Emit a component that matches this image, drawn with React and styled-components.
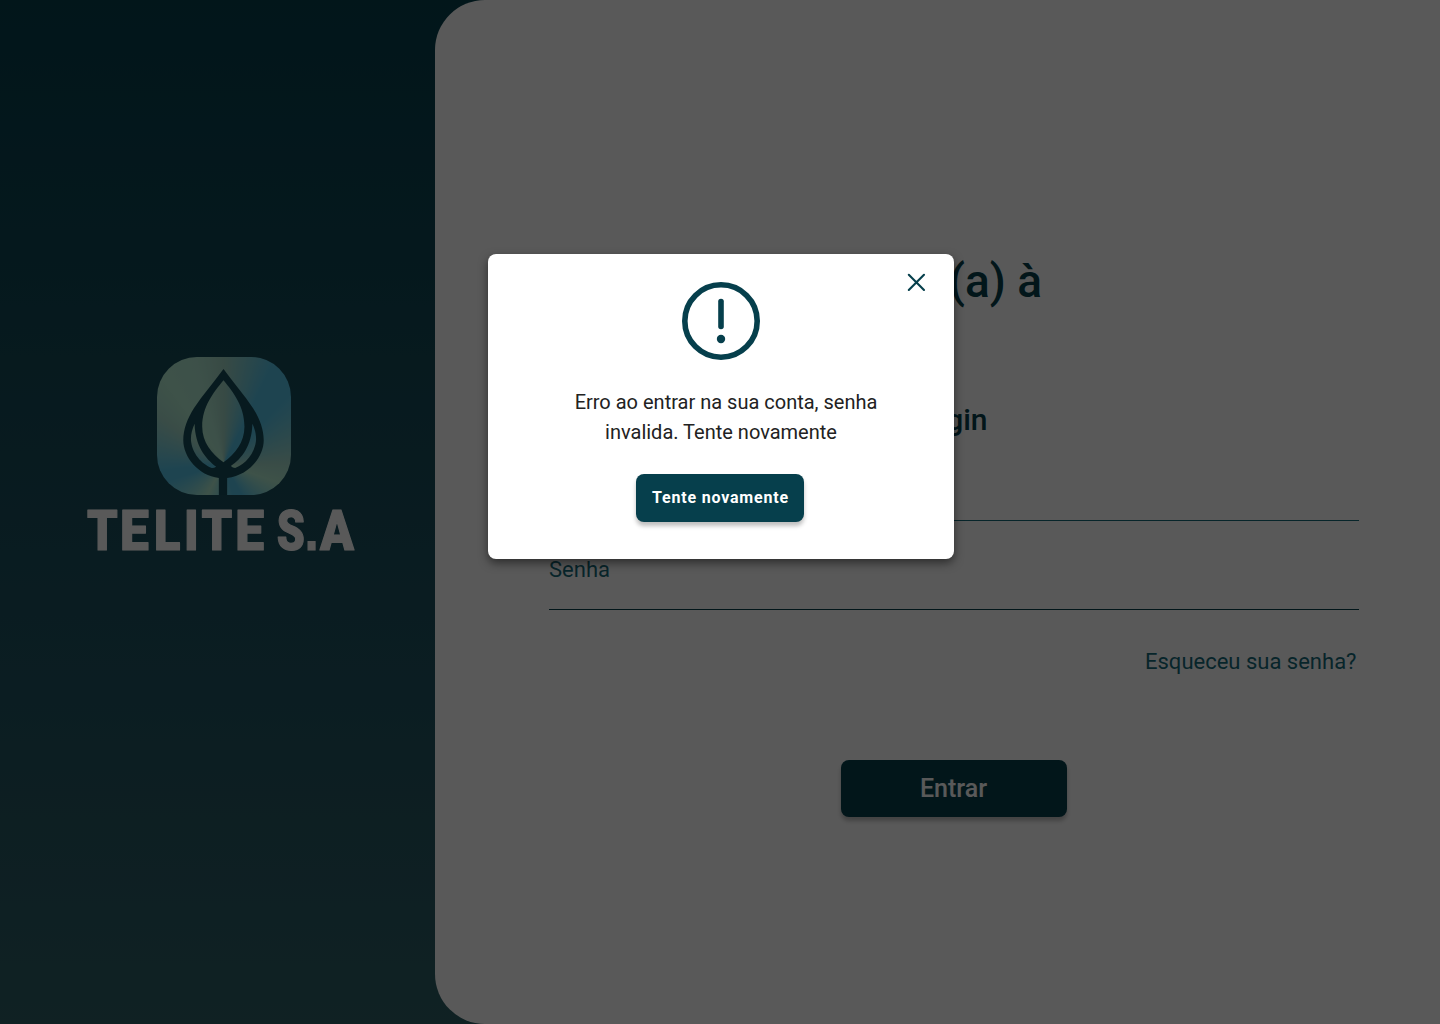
import React from "react";
import styled, { createGlobalStyle } from "styled-components";

const GlobalStyle = createGlobalStyle`
  * { box-sizing: border-box; }
  body { margin: 0; font-family: Roboto, "Liberation Sans", sans-serif; }
  button { font-family: inherit; border: 0; padding: 0; cursor: pointer; }
`;

const teal = "#063f4c";
const tealLight = "#166a7a";

const Page = styled.div`
  position: relative;
  display: flex;
  width: 1440px;
  height: 1024px;
  overflow: hidden;
  background: linear-gradient(180deg, #063f4c 0%, #1e5260 60%, #2e6066 100%);
`;

const Brand = styled.aside`
  width: 435px;
  padding: 357px 0 0 87px;
`;

const Emblem = styled.div`
  width: 133.5px;
  height: 137.5px;
  margin-left: 70px;
  border-radius: 40px;
  background: conic-gradient(
    from 0deg at 50% 77%,
    #a0d4c4 0deg,
    #58c4e6 26deg,
    #58c4e6 44deg,
    #a4dacb 90deg,
    #b2ebd0 110deg,
    #58c4e6 150deg,
    #58c4e6 165deg,
    #b2ebd0 208deg,
    #58c4e6 252deg,
    #58c4e6 264deg,
    #a4dacb 305deg,
    #b2ebd0 325deg,
    #aee6d0 345deg,
    #a0d4c4 360deg
  );
`;

const EmblemDrawing = styled.svg`
  display: block;
  width: 133px;
  height: 138px;
`;

const Wordmark = styled.svg`
  display: block;
  width: 270px;
  height: 60px;
  margin-top: 3.5px;
  overflow: visible;
`;

const Letter = styled.text`
  font-family: ${(p) => (p.$square ? '"Liberation Sans"' : "Roboto")}, sans-serif;
  font-size: 56px;
  font-weight: 900;
  fill: #ffffff;
  stroke: #ffffff;
  stroke-width: 1.2px;
  stroke-linejoin: ${(p) => (p.$square ? "miter" : "round")};
`;

const Panel = styled.main`
  flex: 1;
  display: flex;
  flex-direction: column;
  padding: 254px 81px 0 114px;
  border-radius: 50px 0 0 50px;
  background: #ffffff;
`;

const Title = styled.h1`
  width: 493px;
  margin: 0;
  color: ${teal};
  font-size: 46px;
  font-weight: 500;
  line-height: 54px;
  text-align: right;
  white-space: nowrap;
`;

const Subtitle = styled.h2`
  width: 438.5px;
  margin: 94px 0 0;
  color: ${teal};
  font-size: 30px;
  font-weight: 500;
  line-height: 36px;
  text-align: right;
`;

const Field = styled.label`
  height: ${(p) => p.$height || 89}px;
  padding-top: ${(p) => p.$top || 36}px;
  border-bottom: 1px solid ${(p) => p.$line};
  color: ${tealLight};
  font-size: 22px;
  line-height: 26px;
`;

const Forgot = styled.a`
  align-self: flex-end;
  margin: 39px 2.5px 0 0;
  color: ${tealLight};
  font-size: 22px;
  line-height: 26px;
`;

const Button = styled.button`
  width: ${(p) => p.$width}px;
  height: ${(p) => p.$height}px;
  border-radius: 8px;
  background: ${teal};
  box-shadow: 0 4px 4px rgba(0, 0, 0, 0.25);
  color: #ffffff;
  font-size: ${(p) => p.$size}px;
  font-weight: ${(p) => p.$weight};
  letter-spacing: ${(p) => p.$spacing || 0}px;
`;

const Submit = styled(Button)`
  align-self: center;
  margin: 85px 1px 0 0;
`;

const Overlay = styled.div`
  position: absolute;
  inset: 0;
  padding: 254px 0 0 488px;
  background: rgba(0, 0, 0, 0.65);
`;

const Dialog = styled.section`
  display: grid;
  grid-template-columns: 1fr 78px 1fr;
  justify-items: center;
  align-content: start;
  width: 466px;
  height: 305px;
  padding: 18px 27px 0;
  border-radius: 8px;
  background: #ffffff;
  box-shadow: 0 4px 10px rgba(0, 0, 0, 0.5);
`;

const Alert = styled.svg`
  grid-column: 2;
  margin-top: 10px;
`;

const Close = styled.button`
  grid-column: 3;
  justify-self: end;
  width: 20px;
  height: 20px;
  background: none;

  svg { display: block; }
`;

const Message = styled.p`
  grid-column: 1 / -1;
  width: 330px;
  margin: 27px 0 27px;
  color: #222222;
  font-size: 20px;
  line-height: 30px;
  text-align: center;
  text-indent: 10px;
`;

const Retry = styled(Button)`
  grid-column: 1 / -1;
  margin-right: 2px;
  padding: 0 0 2px 1px;
`;

const letters = [
  { char: "T", x: 0.1, stretch: 0.87 },
  { char: "E", x: 33.1, stretch: 0.92 },
  { char: "L", x: 67.1, stretch: 0.87 },
  { char: "I", x: 97.0, stretch: 0.87 },
  { char: "T", x: 114.6, stretch: 0.87 },
  { char: "E", x: 148.2, stretch: 0.92 },
  { char: "S", x: 189.8, stretch: 0.8 },
  { char: ".", x: 217.8, stretch: 0.88, square: true },
  { char: "A", x: 233.1, stretch: 0.89 },
];

function Logo() {
  return (
    <Brand>
      <Emblem>
        <EmblemDrawing viewBox="30 30 400 414" preserveAspectRatio="none">
          <path
            fill="#164c59"
            fillRule="evenodd"
            d="M230 66 C260 108 292 142 319 184 C338 214 351 246 351 280 C351 330 306 386 241 393 V446 H216 V393 C154 386 109 330 109 280 C109 246 122 214 141 184 C168 142 200 108 230 66 Z
               M230 100 C200 137 166 178 166 239 C166 285 194 319 230 346 C266 319 293 285 293 239 C293 178 260 137 230 100 Z
               M143 230 C136 246 132 260 132 277 C134 318 164 352 195 363 Q202 363 208 359 C175 334 145 297 143 230 Z
               M317 230 C324 246 328 260 328 277 C326 318 296 352 265 363 Q258 363 252 357 C285 334 315 297 317 230 Z"
          />
        </EmblemDrawing>
      </Emblem>
      <Wordmark viewBox="0 0 270 60" aria-label="TELITE S.A">
        {letters.map((l, i) => (
          <Letter key={i} $square={l.square} transform={`translate(${l.x} 51.5) scale(${l.stretch} 1)`}>
            {l.char}
          </Letter>
        ))}
      </Wordmark>
    </Brand>
  );
}

export default function App() {
  return (
    <>
      <GlobalStyle />
      <Page>
        <Logo />
        <Panel>
          <Title>Seja bem-vindo(a) à</Title>
          <Subtitle>Faça seu login</Subtitle>
          <Field $top={30} $height={83} $line={tealLight}>E-mail</Field>
          <Field $line={teal}>Senha</Field>
          <Forgot>Esqueceu sua senha?</Forgot>
          <Submit $width={226} $height={57} $size={25} $weight={500}>Entrar</Submit>
        </Panel>
        <Overlay>
          <Dialog role="dialog">
            <Alert width="78" height="78" viewBox="0 0 78 78" fill="none" stroke={teal}>
              <circle cx="39" cy="39" r="36.2" strokeWidth="5.6" />
              <path d="M39 19.5V44.5" strokeWidth="5.6" strokeLinecap="round" />
              <circle cx="39" cy="57" r="4.2" fill={teal} stroke="none" />
            </Alert>
            <Close aria-label="Fechar">
              <svg width="20" height="20" viewBox="0 0 20 20" stroke={teal} strokeWidth="2.1" strokeLinecap="round">
                <path d="M1.8 2.8L17 18M17 2.8L1.8 18" />
              </svg>
            </Close>
            <Message>Erro ao entrar na sua conta, senha invalida. Tente novamente</Message>
            <Retry $width={168} $height={48} $size={16} $weight={700} $spacing={0.8}>Tente novamente</Retry>
          </Dialog>
        </Overlay>
      </Page>
    </>
  );
}
